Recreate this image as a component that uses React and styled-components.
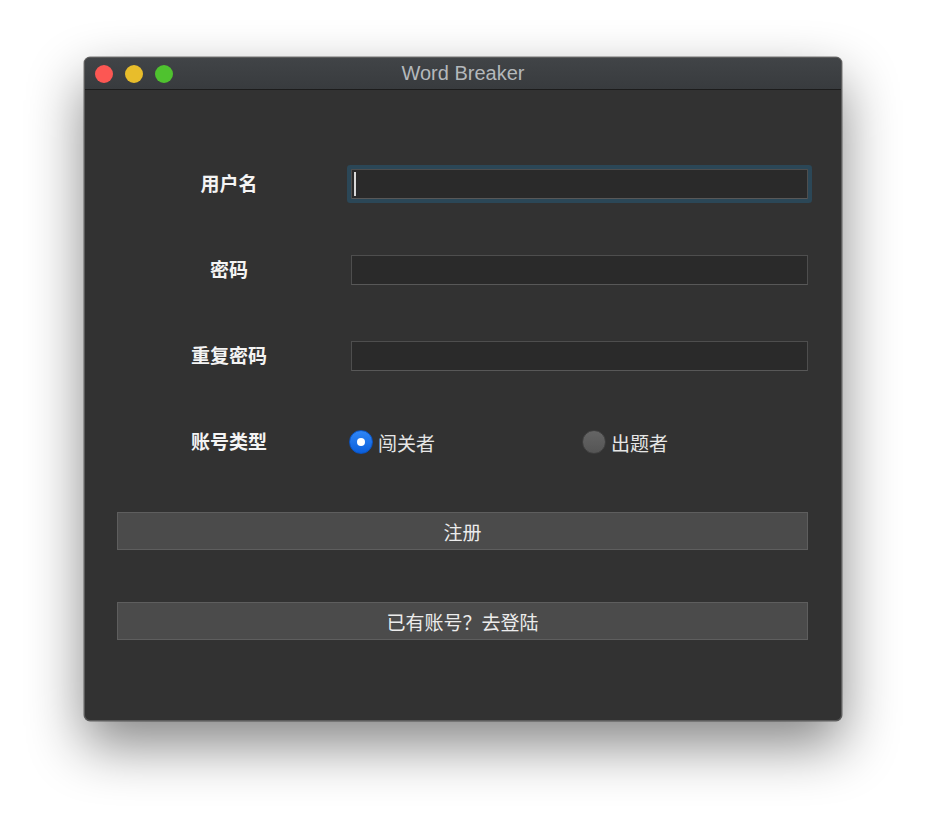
import React from "react";
import styled, { createGlobalStyle } from "styled-components";

const Global = createGlobalStyle`
  html, body { margin: 0; padding: 0; background: #ffffff; }
  body { font-family: "Noto Sans CJK SC", "Noto Sans", sans-serif; }
  * { box-sizing: border-box; }
`;

const Page = styled.div`
  width: 926px;
  height: 832px;
  padding: 57px 0 0 84px;
`;

const Window = styled.div`
  width: 758px;
  height: 664px;
  border-radius: 6px;
  background: #323232;
  border: 1px solid #5c5c5c;
  box-shadow: 0 24px 55px rgba(0, 0, 0, 0.48), 0 0 0 0.5px rgba(0, 0, 0, 0.5);
  overflow: hidden;
  display: flex;
  flex-direction: column;
`;

const TitleBar = styled.div`
  height: 32px;
  flex: none;
  display: flex;
  align-items: center;
  position: relative;
  background: linear-gradient(#414447, #383b3e);
  border-bottom: 1px solid #1c1c1c;
  padding-left: 10px;
`;

const Lights = styled.div`
  display: flex;
  gap: 12px;
`;

const Light = styled.span`
  width: 18px;
  height: 18px;
  border-radius: 50%;
  background: ${(p) => p.$c};
`;

const Title = styled.div`
  position: absolute;
  left: 0;
  right: 0;
  top: 0;
  bottom: 0;
  display: flex;
  align-items: center;
  justify-content: center;
  font-family: "Liberation Sans", "Noto Sans", sans-serif;
  font-size: 20px;
  color: #b4b8bb;
  pointer-events: none;
`;

const Body = styled.div`
  flex: 1;
  padding: 51px 33px 0 32px;
  display: flex;
  flex-direction: column;
`;

const Row = styled.div`
  height: 86px;
  display: grid;
  grid-template-columns: 224px 1fr;
  column-gap: 10px;
  align-items: center;
`;

const Label = styled.div`
  text-align: center;
  font-size: 19px;
  font-weight: 700;
  color: #f4f4f4;
  margin-top: -3px;
`;

const Field = styled.div`
  height: 30px;
  background: #2a2a2a;
  border: 1px solid #4e4e4e;
  border-bottom-color: #585858;
  display: flex;
  align-items: center;
  padding-left: 2px;
  ${(p) =>
    p.$focus &&
    `
    box-shadow: 0 0 0 4px #2b4757;
    border-radius: 1px;
  `}
`;

const Caret = styled.span`
  width: 2px;
  height: 24px;
  background: #d8d8d8;
`;

const Radios = styled.div`
  display: grid;
  grid-template-columns: 233px 1fr;
  align-items: center;
  margin-left: -2px;
`;

const RadioItem = styled.div`
  display: flex;
  align-items: center;
  gap: 5px;
  font-size: 19px;
  color: #e6e6e6;
`;

const RadioDot = styled.span`
  width: 24px;
  height: 24px;
  border-radius: 50%;
  display: flex;
  align-items: center;
  justify-content: center;
  background: ${(p) =>
    p.$on
      ? "linear-gradient(#2f86f6, #0b5fdc)"
      : "linear-gradient(#656565, #555555)"};
  border: 1px solid ${(p) => (p.$on ? "#0a52c0" : "#3e3e3e")};
  &::after {
    content: "";
    display: ${(p) => (p.$on ? "block" : "none")};
    width: 8px;
    height: 8px;
    border-radius: 50%;
    background: #ffffff;
  }
`;

const Button = styled.div`
  height: 38px;
  margin-top: ${(p) => p.$mt}px;
  background: #4b4b4b;
  border: 1px solid #5e5e5e;
  display: flex;
  align-items: center;
  justify-content: center;
  font-size: 19px;
  color: #ececec;
`;

export default function App() {
  return (
    <>
      <Global />
      <Page>
        <Window>
          <TitleBar>
            <Lights>
              <Light $c="#fc5753" />
              <Light $c="#e8bd2b" />
              <Light $c="#4fc22f" />
            </Lights>
            <Title>Word Breaker</Title>
          </TitleBar>
          <Body>
            <Row>
              <Label>用户名</Label>
              <Field $focus>
                <Caret />
              </Field>
            </Row>
            <Row>
              <Label>密码</Label>
              <Field />
            </Row>
            <Row>
              <Label>重复密码</Label>
              <Field />
            </Row>
            <Row>
              <Label>账号类型</Label>
              <Radios>
                <RadioItem>
                  <RadioDot $on />
                  闯关者
                </RadioItem>
                <RadioItem>
                  <RadioDot />
                  出题者
                </RadioItem>
              </Radios>
            </Row>
            <Button $mt={27}>注册</Button>
            <Button $mt={52}>已有账号？去登陆</Button>
          </Body>
        </Window>
      </Page>
    </>
  );
}
